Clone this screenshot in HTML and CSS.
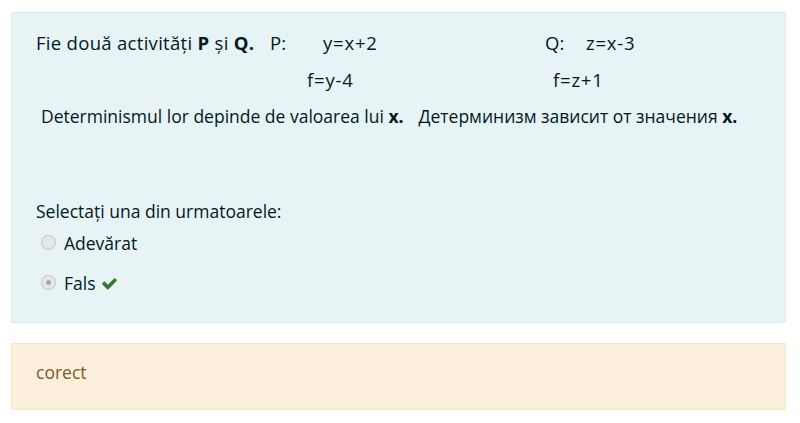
FILE: index.html
```html
<!DOCTYPE html>
<html lang="ro">
<head>
<meta charset="utf-8">
<title>Întrebare</title>
<link rel="stylesheet" href="styles.css">
</head>
<body>
<div class="page">
  <div class="formulation">
    <div class="qtext">
      <div class="line big">
        <span class="c1">Fie două activități <b>P</b> și <b>Q.</b></span>
        <span class="c2">P:</span>
        <span class="c3 f">y=x+2</span>
        <span class="c4">Q:</span>
        <span class="c5 f">z=x-3</span>
      </div>
      <div class="line big">
        <span class="d1 f">f=y-4</span>
        <span class="d2 f">f=z+1</span>
      </div>
      <div class="line indent">
        <span class="e1">Determinismul lor depinde de valoarea lui <b>x.</b></span>
        <span>Детерминизм зависит от значения <b>x.</b></span>
      </div>
    </div>
    <div class="ablock">
      <div class="prompt">Selectați una din urmatoarele:</div>
      <div class="answer">
        <div class="option first"><span class="radio"></span><span class="label">Adevărat</span></div>
        <div class="option"><span class="radio checked"></span><span class="label">Fals</span>
          <svg class="check" viewBox="0 0 1792 1792" aria-hidden="true"><path d="M1671 566q0 40-28 68l-724 724-136 136q-28 28-68 28t-68-28l-136-136-362-362q-28-28-28-68t28-68l136-136q28-28 68-28t68 28l294 295 656-657q28-28 68-28t68 28l136 136q28 28 28 68z"/></svg>
        </div>
      </div>
    </div>
  </div>
  <div class="outcome">
    <div class="feedback">corect</div>
  </div>
</div>
</body>
</html>
```

FILE: styles.css
```css
html, body {
  margin: 0;
  padding: 0;
  background: #ffffff;
}
body {
  font-family: "Open Sans", "Noto Sans", sans-serif;
  font-size: 17.5px;
  color: #001a1e;
}
.page {
  padding: 12px 14px 0 11px;
}
.formulation {
  background: #e7f3f5;
  border: 1px solid #d8eaee;
  border-radius: 2px;
  height: 311px;
  box-sizing: border-box;
  padding: 11px 24px 0 24px;
}
.qtext .line {
  display: flex;
  height: 37px;
  line-height: 37px;
  white-space: nowrap;
}
.qtext .line.big {
  font-size: 18.5px;
}
.c1 { width: 234px; letter-spacing: 0.3px; }
.c2 { width: 53px; }
.c3 { width: 222px; }
.c4 { width: 41px; }
.f { letter-spacing: 0.8px; }
.d1 { margin-left: 271px; width: 246px; }
.qtext b { font-weight: 700; }
.indent { padding-left: 5px; }
.e1 { margin-right: 15px; }
.ablock {
  margin-top: 63px;
}
.prompt {
  line-height: 27px;
  height: 27px;
}
.option {
  display: flex;
  align-items: center;
  height: 27px;
  line-height: 27px;
  padding-left: 5px;
  margin-top: 13px;
}
.option.first { margin-top: 5px; }
.radio {
  width: 13px;
  height: 13px;
  border-radius: 50%;
  border: 1px solid #c4c4c4;
  background: #e6e6e6;
  box-sizing: content-box;
  margin-right: 8px;
  margin-top: -2px;
  display: flex;
  align-items: center;
  justify-content: center;
}
.radio.checked::after {
  content: "";
  width: 5px;
  height: 5px;
  border-radius: 50%;
  background: #a9a9a9;
}
.check {
  width: 17px;
  height: 17px;
  fill: #357a32;
  margin-left: 5px;
}
.outcome {
  margin-top: 20px;
  background: #fcefdc;
  border: 1px solid #fbe8cd;
  height: 67px;
  box-sizing: border-box;
  padding: 0 24px;
  color: #7d5a29;
  display: flex;
  align-items: center;
}
.feedback {
  line-height: 27px;
  margin-top: -8px;
}
```
